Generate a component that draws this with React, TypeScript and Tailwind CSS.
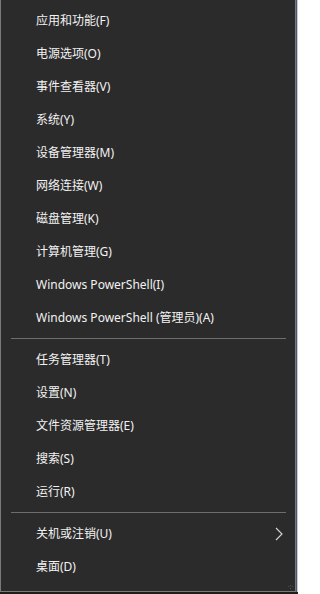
const groups: string[][] = [
  [
    '应用和功能(F)',
    '电源选项(O)',
    '事件查看器(V)',
    '系统(Y)',
    '设备管理器(M)',
    '网络连接(W)',
    '磁盘管理(K)',
    '计算机管理(G)',
    'Windows PowerShell(I)',
    'Windows PowerShell (管理员)(A)',
  ],
  ['任务管理器(T)', '设置(N)', '文件资源管理器(E)', '搜索(S)', '运行(R)'],
  ['关机或注销(U)', '桌面(D)'],
];

const Separator = () => (
  <div className="h-[9px] flex items-center pl-[10px] pr-[9px]">
    <div className="h-px w-full bg-[#6e6e6e]" />
  </div>
);

const Item = ({ label, submenu }: { label: string; submenu?: boolean }) => (
  <div className="h-[33px] flex items-center justify-between pl-[35px] pr-[12px] text-[12px] text-[#f2f2f2]">
    <span>{label}</span>
    {submenu && (
      <svg width="8" height="14" viewBox="0 0 8 14" className="text-[#d8d8d8]">
        <polyline points="1,1 7,7 1,13" fill="none" stroke="currentColor" strokeWidth="1.1" />
      </svg>
    )}
  </div>
);

export default function App() {
  return (
    <div
      className="w-[298px] h-[594px] flex flex-col bg-[#1c1c1c]"
      style={{ fontFamily: '"Noto Sans", "Noto Sans CJK SC", sans-serif' }}
    >
      <div className="flex h-[592px]">
        <div className="w-[296px] h-full bg-[#2b2b2b] border-l border-r border-b border-[#7a7a7a] pt-[4px] flex flex-col relative">
          {groups.map((g, gi) => (
            <div key={gi}>
              {gi > 0 && <Separator />}
              {g.map((label) => (
                <Item key={label} label={label} submenu={label.startsWith('关机')} />
              ))}
            </div>
          ))}
          <div className="absolute right-[2px] bottom-[1px] text-[6px] leading-none text-[#9a9a9a]">⁘</div>
        </div>
        <div className="w-[2px] h-full flex">
          <div className="w-px h-full bg-[#4d5a6b]" />
          <div className="w-px h-full bg-[#c9ced6]" />
        </div>
      </div>
      <div className="h-[2px] bg-[#1e1e1e]" />
    </div>
  );
}
